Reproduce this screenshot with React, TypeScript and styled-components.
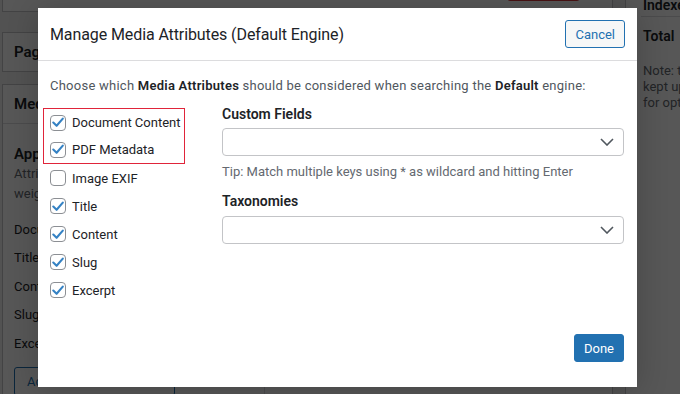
import React from "react";
import styled, { createGlobalStyle } from "styled-components";

const GlobalStyle = createGlobalStyle`
  html, body {
    margin: 0;
    padding: 0;
  }
  body {
    font-family: Roboto, "Liberation Sans", sans-serif;
    color: #1d2327;
    background: #f0f0f1;
  }
`;

const Page = styled.div`
  position: relative;
  width: 680px;
  height: 394px;
  overflow: hidden;
  display: flex;
  gap: 12px;
  padding-left: 2px;
  box-sizing: border-box;
  background: #f0f0f1;
`;

const MainCol = styled.div`
  width: 611px;
  flex-shrink: 0;
  display: flex;
  flex-direction: column;
  margin-top: -30px;
`;

const Panel = styled.div<{ $h?: number; $gap?: number }>`
  background: #fff;
  border: 1px solid #c3c4c7;
  height: ${(p) => (p.$h ? `${p.$h}px` : "auto")};
  margin-top: ${(p) => p.$gap ?? 0}px;
  box-sizing: border-box;
  flex-shrink: 0;
`;

const PanelHead = styled.div<{ $h?: number; $bottom?: boolean }>`
  display: flex;
  align-items: ${(p) => (p.$bottom ? "flex-end" : "center")};
  height: ${(p) => p.$h ?? 38}px;
  padding: 0 11px;
  font-size: 15px;
  font-weight: 600;
  gap: 12px;
`;

const Spacer = styled.div`
  flex: 1;
`;

const Count = styled.span`
  font-size: 13px;
  font-style: italic;
  font-weight: 400;
  color: #646970;
`;

const RemoveBtn = styled.span`
  font-size: 13px;
  font-weight: 400;
  color: #d63638;
  border: 1px solid #d63638;
  border-radius: 3px;
  padding: 4px 12px;
`;

const CaretBtn = styled.span`
  font-size: 10px;
  color: #50575e;
  padding: 0 2px;
`;

const MediaBody = styled.div`
  display: flex;
  border-top: 1px solid #dcdcde;
`;

const AttrCol = styled.div`
  width: 239px;
  border-right: 1px solid #dcdcde;
  padding: 20px 11px 0;
  font-size: 13px;
`;

const AttrTitle = styled.div`
  font-size: 15px;
  font-weight: 600;
  line-height: 20px;
`;

const AttrNote = styled.div`
  color: #646970;
  line-height: 20px;
  margin-bottom: 11px;
  white-space: nowrap;
`;

const AttrRow = styled.div`
  height: 28.5px;
  display: flex;
  align-items: center;
`;

const OutlineBtn = styled.div`
  display: inline-block;
  margin-top: 9px;
  padding: 6px 12px;
  border: 1px solid #2271b1;
  border-radius: 3px;
  color: #2271b1;
  font-size: 13px;
`;

const Sidebar = styled.div`
  flex: 1;
  background: #fff;
  border-left: 1px solid #c3c4c7;
  padding-left: 17px;
  font-size: 13px;
`;

const SideHead = styled.div`
  height: 16px;
  line-height: 10px;
  font-size: 14px;
  font-weight: 600;
  border-bottom: 1px solid #dcdcde;
  margin-left: -2px;
  padding-left: 2px;
  overflow: hidden;
`;

const SideTotal = styled.div`
  font-weight: 600;
  font-size: 14px;
  margin-top: 10px;
  line-height: 18px;
`;

const SideNote = styled.div`
  color: #646970;
  line-height: 16px;
  margin-top: 18px;
  white-space: nowrap;
`;

const Overlay = styled.div`
  position: absolute;
  inset: 0;
  background: rgba(0, 0, 0, 0.66);
`;

const Modal = styled.div`
  position: absolute;
  left: 38px;
  top: 8px;
  width: 599px;
  height: 379px;
  background: #fff;
  box-shadow: 0 3px 30px rgba(0, 0, 0, 0.2);
  display: flex;
  flex-direction: column;
`;

const ModalHeader = styled.div`
  height: 52px;
  flex-shrink: 0;
  display: flex;
  align-items: center;
  justify-content: space-between;
  padding: 0 12px;
  border-bottom: 1px solid #dcdcde;
`;

const Title = styled.h1`
  margin: 0;
  font-size: 16px;
  font-weight: 400;
  letter-spacing: -0.1px;
  color: #1d2327;
`;

const Button = styled.button<{ $primary?: boolean }>`
  font-family: inherit;
  font-size: 13px;
  height: 28px;
  padding: 0 9px;
  border-radius: 3px;
  border: 1px solid #2271b1;
  background: ${(p) => (p.$primary ? "#2271b1" : "#f6f7f7")};
  color: ${(p) => (p.$primary ? "#fff" : "#2271b1")};
  cursor: pointer;
`;

const ModalBody = styled.div`
  flex: 1;
  padding: 16px 13px 0 12px;
  display: flex;
  flex-direction: column;
`;

const Intro = styled.p`
  margin: 0 0 9px;
  font-size: 13px;
  line-height: 18px;
  letter-spacing: 0.25px;
  color: #50575e;
  white-space: nowrap;
  strong {
    font-weight: 600;
    color: #1d2327;
  }
`;

const Columns = styled.div`
  display: flex;
  align-items: flex-start;
`;

const LeftCol = styled.div`
  width: 172px;
  flex-shrink: 0;
  padding-top: 4px;
`;

const Highlight = styled.div`
  width: 142px;
  margin-left: -7px;
  padding-left: 6px;
  border: 1px solid #e0243a;
  box-sizing: border-box;
`;

const CheckRow = styled.label<{ $h?: number }>`
  height: ${(p) => p.$h ?? 28}px;
  display: flex;
  align-items: center;
  gap: 6px;
  font-size: 13px;
  color: #1d2327;
  white-space: nowrap;
`;

const Box = styled.span`
  width: 16px;
  height: 16px;
  box-sizing: border-box;
  border: 1px solid #8c8f94;
  border-radius: 4px;
  background: #fff;
  display: flex;
  align-items: center;
  justify-content: center;
  flex-shrink: 0;
`;

const RightCol = styled.div`
  flex: 1;
  display: flex;
  flex-direction: column;
`;

const FieldLabel = styled.div<{ $top?: number }>`
  font-size: 14px;
  font-weight: 600;
  line-height: 20px;
  margin-top: ${(p) => p.$top ?? 0}px;
  color: #1d2327;
`;

const Select = styled.div<{ $top?: number }>`
  height: 28px;
  margin-top: ${(p) => p.$top ?? 0}px;
  border: 1px solid #c3c4c7;
  border-radius: 4px;
  box-sizing: border-box;
  display: flex;
  align-items: center;
  justify-content: flex-end;
  padding-right: 9px;
`;

const Tip = styled.div`
  margin-top: 7px;
  font-size: 13px;
  line-height: 18px;
  color: #646970;
`;

const Footer = styled.div`
  display: flex;
  justify-content: flex-end;
  padding: 0 13px 25px 0;
`;

function Check({ on }: { on: boolean }) {
  return (
    <Box>
      {on && (
        <svg width="12" height="11" viewBox="0 0 12 11">
          <path
            d="M1.3 5.6 L4.6 8.8 L10.8 1.6"
            fill="none"
            stroke="#3582c4"
            strokeWidth="2.1"
            strokeLinecap="round"
            strokeLinejoin="round"
          />
        </svg>
      )}
    </Box>
  );
}

function Chevron() {
  return (
    <svg width="14" height="8" viewBox="0 0 14 8">
      <path d="M1 1 L7 7 L13 1" fill="none" stroke="#50575e" strokeWidth="1.6" />
    </svg>
  );
}

const items: [string, boolean][] = [
  ["Image EXIF", false],
  ["Title", true],
  ["Content", true],
  ["Slug", true],
  ["Excerpt", true],
];

const mediaAttrs = ["Document Content", "Title", "Content", "Slug", "Excerpt"];

export default function App() {
  return (
    <>
      <GlobalStyle />
      <Page>
        <MainCol>
          <Panel $h={42}>
            <PanelHead $h={30} $bottom>
              Posts
              <Spacer />
              <Count>4 Attributes</Count>
              <RemoveBtn>Remove</RemoveBtn>
              <CaretBtn>▾</CaretBtn>
            </PanelHead>
          </Panel>
          <Panel $h={40} $gap={20}>
            <PanelHead>Pages</PanelHead>
          </Panel>
          <Panel $gap={12}>
            <PanelHead>Media</PanelHead>
            <MediaBody>
              <AttrCol>
                <AttrTitle>Applicable Attribute Relevance</AttrTitle>
                <AttrNote>
                  Attribute relevance is determined by the
                  <br />
                  weight you apply to each attribute
                </AttrNote>
                {mediaAttrs.map((a) => (
                  <AttrRow key={a}>{a}</AttrRow>
                ))}
                <OutlineBtn>Add/Remove Attributes</OutlineBtn>
              </AttrCol>
            </MediaBody>
          </Panel>
        </MainCol>
        <Sidebar>
          <SideHead>Indexer</SideHead>
          <SideTotal>Total</SideTotal>
          <SideNote>
            Note: the index is
            <br />
            kept up to date
            <br />
            for optimal results
          </SideNote>
        </Sidebar>
        <Overlay />
        <Modal>
          <ModalHeader>
            <Title>Manage Media Attributes (Default Engine)</Title>
            <Button>Cancel</Button>
          </ModalHeader>
          <ModalBody>
            <Intro>
              Choose which <strong>Media Attributes</strong> should be considered when
              searching the <strong>Default</strong> engine:
            </Intro>
            <Columns>
              <LeftCol>
                <Highlight>
                  <CheckRow $h={27}>
                    <Check on />
                    Document Content
                  </CheckRow>
                  <CheckRow $h={27}>
                    <Check on />
                    PDF Metadata
                  </CheckRow>
                </Highlight>
                {items.map(([label, on]) => (
                  <CheckRow key={label}>
                    <Check on={on} />
                    {label}
                  </CheckRow>
                ))}
              </LeftCol>
              <RightCol>
                <FieldLabel>Custom Fields</FieldLabel>
                <Select $top={4}>
                  <Chevron />
                </Select>
                <Tip>Tip: Match multiple keys using * as wildcard and hitting Enter</Tip>
                <FieldLabel $top={10}>Taxonomies</FieldLabel>
                <Select $top={5}>
                  <Chevron />
                </Select>
              </RightCol>
            </Columns>
          </ModalBody>
          <Footer>
            <Button $primary>Done</Button>
          </Footer>
        </Modal>
      </Page>
    </>
  );
}
